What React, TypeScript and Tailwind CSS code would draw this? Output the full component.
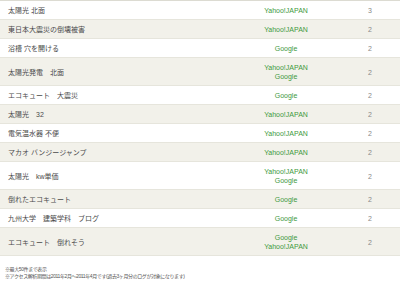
const rows: { keyword: string; engines: string[]; count: number }[] = [
  { keyword: '太陽光 北面', engines: ['Yahoo!JAPAN'], count: 3 },
  { keyword: '東日本大震災の倒壊被害', engines: ['Yahoo!JAPAN'], count: 2 },
  { keyword: '浴槽 穴を開ける', engines: ['Google'], count: 2 },
  { keyword: '太陽光発電　北面', engines: ['Yahoo!JAPAN', 'Google'], count: 2 },
  { keyword: 'エコキュート　大震災', engines: ['Google'], count: 2 },
  { keyword: '太陽光　32', engines: ['Yahoo!JAPAN'], count: 2 },
  { keyword: '電気温水器 不便', engines: ['Yahoo!JAPAN'], count: 2 },
  { keyword: 'マカオ バンジージャンプ', engines: ['Yahoo!JAPAN'], count: 2 },
  { keyword: '太陽光　kw単価', engines: ['Yahoo!JAPAN', 'Google'], count: 2 },
  { keyword: '倒れたエコキュート', engines: ['Google'], count: 2 },
  { keyword: '九州大学　建築学科　ブログ', engines: ['Google'], count: 2 },
  { keyword: 'エコキュート　倒れそう', engines: ['Google', 'Yahoo!JAPAN'], count: 2 },
];

export default function App() {
  return (
    <div
      className="w-[400px] h-[287px] overflow-hidden bg-white"
      style={{ fontFamily: '"Liberation Sans", "Noto Sans CJK JP", sans-serif' }}
    >
      <div className="border-t border-[#dcdbd2]">
        {rows.map((row, i) => (
          <div
            key={i}
            className={
              'grid grid-cols-[232px_108px_60px] items-center border-b border-[#e6e5dc] pt-[5px] pb-[4px] text-[7px] leading-[9px] ' +
              (i % 2 === 1 ? 'bg-[#f2f1ea]' : 'bg-white')
            }
          >
            <div className="pl-[8px] text-[#4a4a4a]">{row.keyword}</div>
            <div className="text-center text-[#3e9a3e]">
              {row.engines.map((e) => (
                <div key={e}>{e}</div>
              ))}
            </div>
            <div className="text-center text-[#888]">{row.count}</div>
          </div>
        ))}
      </div>
      <div className="mt-[10px] pl-[5px] text-[5px] leading-[7px] tracking-[-0.4px] text-[#555]">
        <div>※最大50件まで表示</div>
        <div>※アクセス解析期間は2011年2月～2011年4月です(過去3ヶ月分のログが対象になります)</div>
      </div>
    </div>
  );
}
